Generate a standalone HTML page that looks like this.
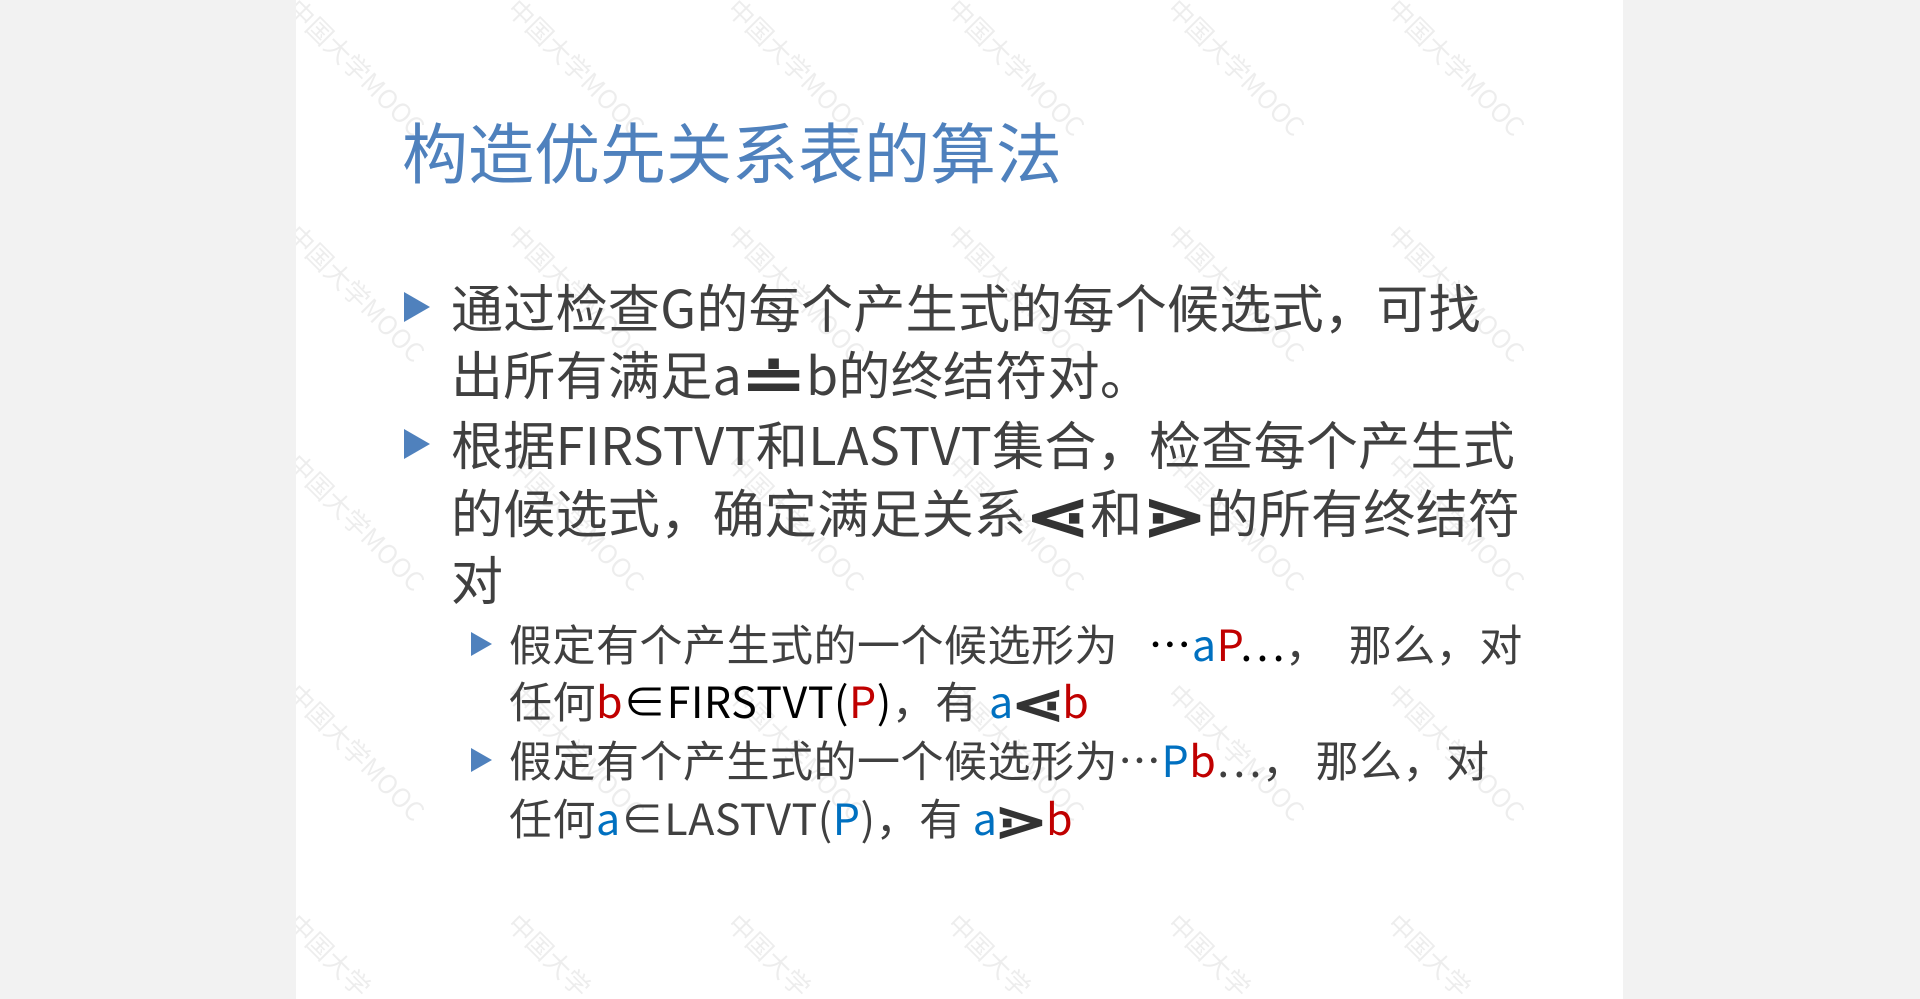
<!DOCTYPE html>
<html><head><meta charset="utf-8"><style>
html,body{margin:0;padding:0;}
body{width:1920px;height:999px;background:#f2f2f2;position:relative;overflow:hidden;font-family:"Liberation Sans","Noto Sans CJK SC",sans-serif;}
#slide{position:absolute;left:296px;top:0;width:1327px;height:999px;background:#fff;overflow:hidden;}
.wm{position:absolute;font-size:26px;color:rgba(0,0,0,0.07);transform:rotate(45deg);transform-origin:0 0;white-space:nowrap;font-family:"Noto Sans CJK SC",sans-serif;}
.t{position:absolute;white-space:nowrap;color:#404040;font-family:"Noto Sans CJK SC","Liberation Sans",sans-serif;}
.title{left:106px;top:110px;font-size:66px;color:#4f81bd;line-height:80px;}
.m{font-size:52px;line-height:60px;left:155px;letter-spacing:0.3px;}
.s{font-size:43px;line-height:50px;left:213px;letter-spacing:0.5px;}
.tri{position:absolute;width:0;height:0;border-top:15px solid transparent;border-bottom:15px solid transparent;border-left:26px solid #4f81bd;}
.tri2{position:absolute;width:0;height:0;border-top:12px solid transparent;border-bottom:12px solid transparent;border-left:21px solid #4f81bd;}
.r{color:#c00000}.b{color:#0070c0}.k{color:#000}
.sym{display:inline-block;font-weight:bold;transform:scale(1.5,1.3);margin:0 10px;color:#333;}
</style></head><body>
<div id="slide">
<div class="wm" style="left:10px;top:-10px">中国大学MOOC</div>
<div class="wm" style="left:230px;top:-10px">中国大学MOOC</div>
<div class="wm" style="left:450px;top:-10px">中国大学MOOC</div>
<div class="wm" style="left:670px;top:-10px">中国大学MOOC</div>
<div class="wm" style="left:890px;top:-10px">中国大学MOOC</div>
<div class="wm" style="left:1110px;top:-10px">中国大学MOOC</div>
<div class="wm" style="left:10px;top:216px">中国大学MOOC</div>
<div class="wm" style="left:230px;top:216px">中国大学MOOC</div>
<div class="wm" style="left:450px;top:216px">中国大学MOOC</div>
<div class="wm" style="left:670px;top:216px">中国大学MOOC</div>
<div class="wm" style="left:890px;top:216px">中国大学MOOC</div>
<div class="wm" style="left:1110px;top:216px">中国大学MOOC</div>
<div class="wm" style="left:10px;top:445px">中国大学MOOC</div>
<div class="wm" style="left:230px;top:445px">中国大学MOOC</div>
<div class="wm" style="left:450px;top:445px">中国大学MOOC</div>
<div class="wm" style="left:670px;top:445px">中国大学MOOC</div>
<div class="wm" style="left:890px;top:445px">中国大学MOOC</div>
<div class="wm" style="left:1110px;top:445px">中国大学MOOC</div>
<div class="wm" style="left:10px;top:675px">中国大学MOOC</div>
<div class="wm" style="left:230px;top:675px">中国大学MOOC</div>
<div class="wm" style="left:450px;top:675px">中国大学MOOC</div>
<div class="wm" style="left:670px;top:675px">中国大学MOOC</div>
<div class="wm" style="left:890px;top:675px">中国大学MOOC</div>
<div class="wm" style="left:1110px;top:675px">中国大学MOOC</div>
<div class="wm" style="left:10px;top:905px">中国大学</div>
<div class="wm" style="left:230px;top:905px">中国大学</div>
<div class="wm" style="left:450px;top:905px">中国大学</div>
<div class="wm" style="left:670px;top:905px">中国大学</div>
<div class="wm" style="left:890px;top:905px">中国大学</div>
<div class="wm" style="left:1110px;top:905px">中国大学</div>

<div class="t title">构造优先关系表的算法</div>

<div class="tri" style="left:108px;top:292px"></div>
<div class="t m" style="top:276px">通过检查G的每个产生式的每个候选式，可找</div>
<div class="t m" style="top:343px">出所有满足a<span class="sym">≐</span>b的终结符对。</div>
<div class="tri" style="left:108px;top:429px"></div>
<div class="t m" style="top:413px">根据FIRSTVT和LASTVT集合，检查每个产生式</div>
<div class="t m" style="top:481px">的候选式，确定满足关系<span class="sym">⋖</span>和<span class="sym">⋗</span>的所有终结符</div>
<div class="t m" style="top:548px">对</div>

<div class="tri2" style="left:175px;top:632px"></div>
<div class="t s" style="top:618px">假定有个产生式的一个候选形为&nbsp;&nbsp; <span class="k">…</span><span class="b">a</span><span class="r">P</span><span class="k">…</span>，&nbsp;&nbsp;那么，对</div>
<div class="t s" style="top:675px">任何<span class="r">b</span><span class="k">∈FIRSTVT(</span><span class="r">P</span><span class="k">)</span>，有 <span class="b">a</span><span class="sym" style="margin:0 6px">⋖</span><span class="r">b</span></div>
<div class="tri2" style="left:175px;top:748px"></div>
<div class="t s" style="top:734px">假定有个产生式的一个候选形为…<span class="b">P</span><span class="r">b</span>…，&nbsp;那么，对</div>
<div class="t s" style="top:792px">任何<span class="b">a</span>∈LASTVT(<span class="b">P</span>)，有 <span class="b">a</span><span class="sym" style="margin:0 6px">⋗</span><span class="r">b</span></div>
</div>
</body></html>
